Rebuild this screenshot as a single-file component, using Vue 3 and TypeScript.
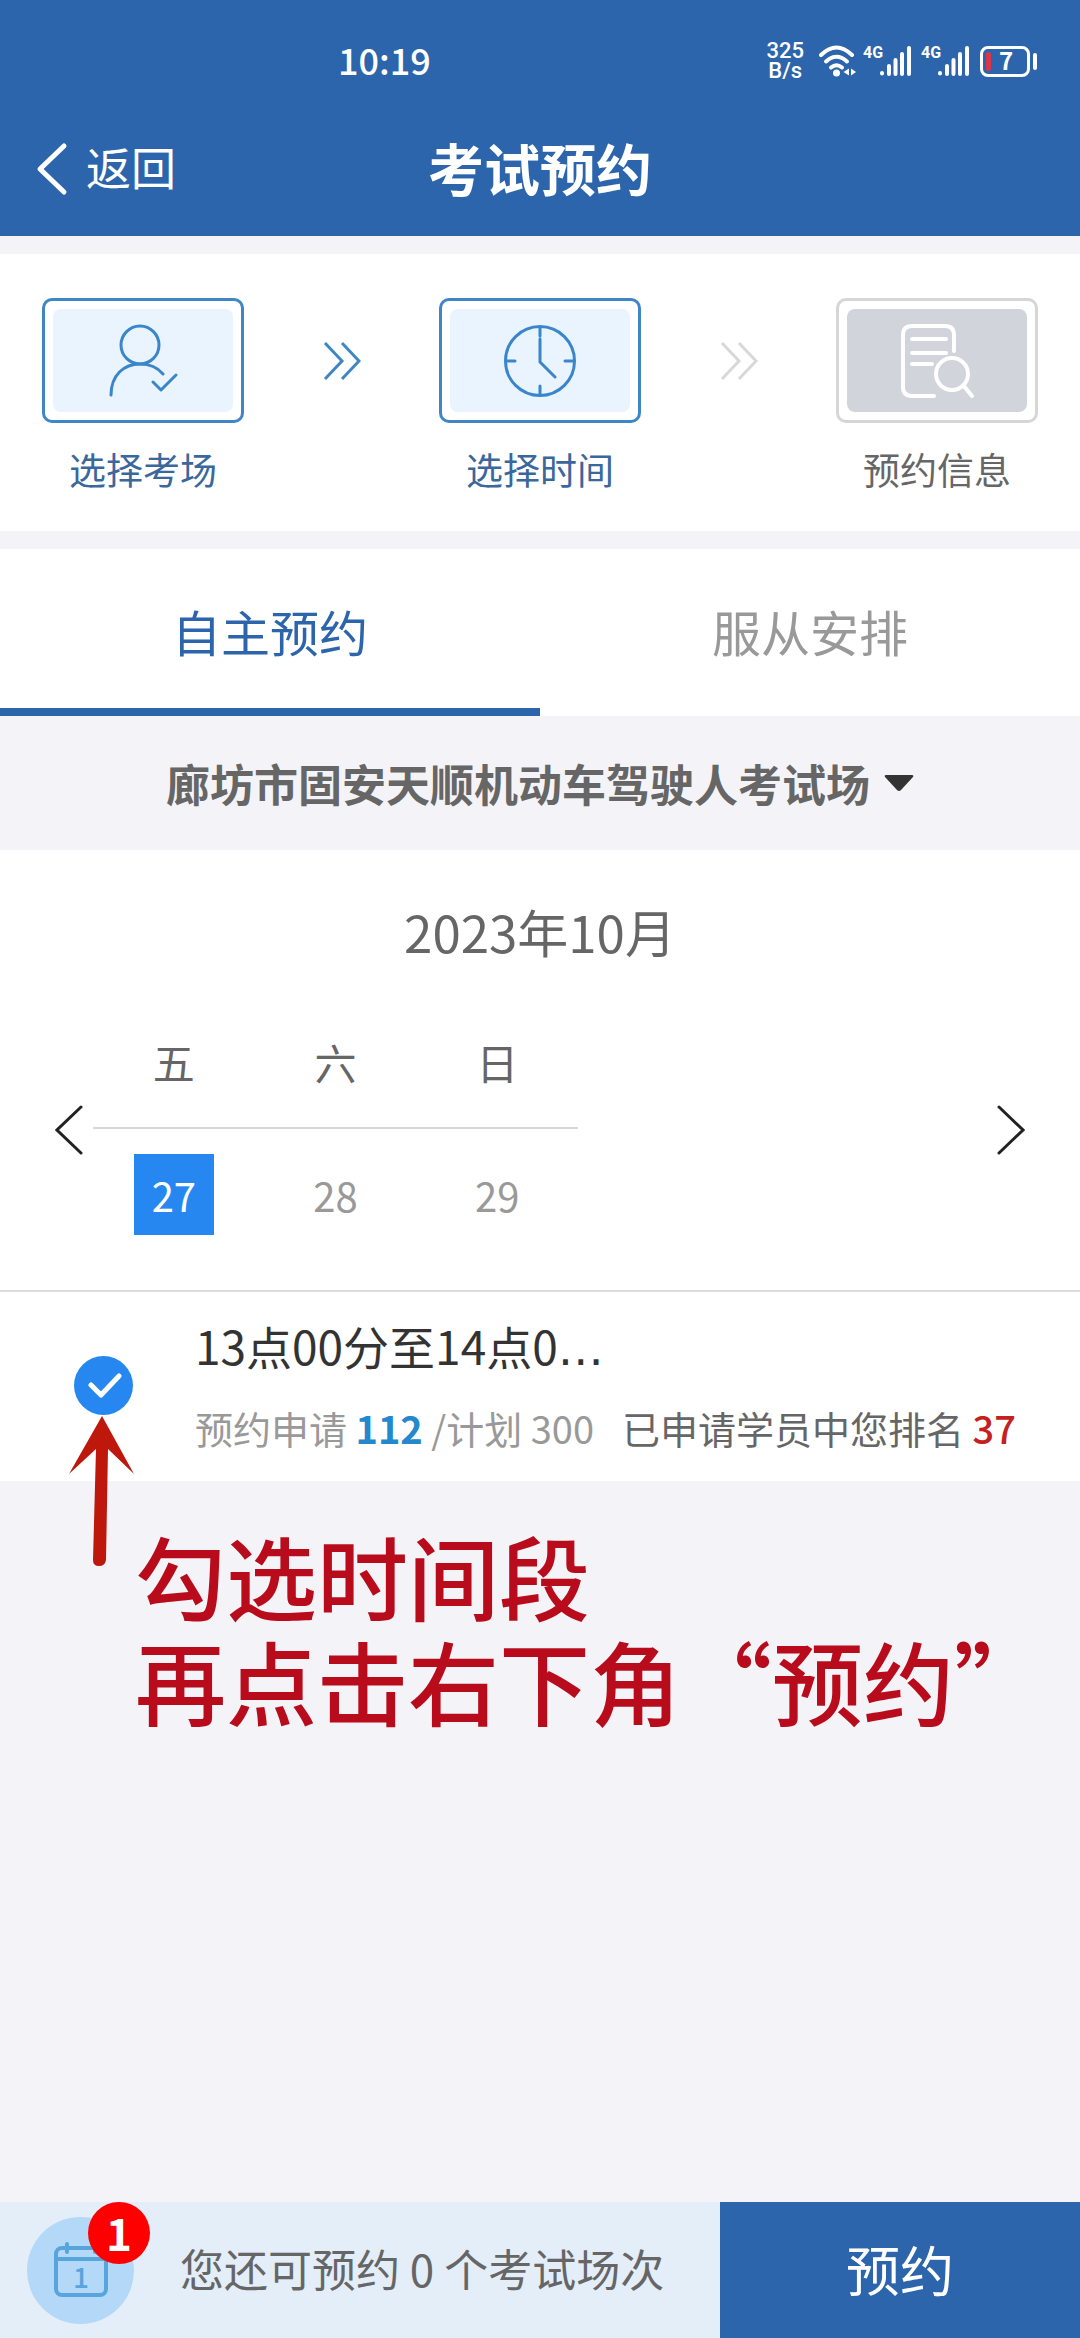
<script setup lang="ts">
import { ref } from 'vue'

interface Step {
  key: 'place' | 'time' | 'info'
  label: string
  active: boolean
}

const steps: Step[] = [
  { key: 'place', label: '选择考场', active: true },
  { key: 'time', label: '选择时间', active: true },
  { key: 'info', label: '预约信息', active: false },
]

const tabs = ['自主预约', '服从安排']
const activeTab = ref(0)

const venues = ['廊坊市固安天顺机动车驾驶人考试场']
const venue = ref(venues[0])

const weekdays = ['五', '六', '日']
const days = [27, 28, 29]
const selectedDay = ref(27)

const slotChecked = ref(true)
const signals = [0, 1]
</script>

<template>
  <div class="page">
    <header class="top">
      <div class="status">
        <span class="clock">10:19</span>
        <div class="indicators">
          <span class="speed"><span>325</span><span>B/s</span></span>
          <svg class="wifi" viewBox="0 0 37 32" width="37" height="32" aria-hidden="true">
            <g fill="none" stroke="#fff" stroke-width="4" stroke-linecap="round">
              <path d="M2 10Q17.500 -5 33 10" />
              <path d="M7 16.500Q17.500 7 28 16.500" />
              <path d="M12 22.500Q17.500 18 23 22.500" />
            </g>
            <circle cx="17.500" cy="28" r="3.500" fill="#fff" />
            <path d="M30 23.500V30.500L24.500 27zM32 23.500V30.500L37 27z" fill="#fff" />
          </svg>
          <span v-for="s in signals" :key="s" class="signal">
            <span class="net">4G</span>
            <svg viewBox="0 0 31 32" width="31" height="32" aria-hidden="true">
              <g stroke="#fff" stroke-width="4" stroke-linecap="round">
                <path d="M2 28V28.500M9 21V29M15.500 15V29M22 9V29M29 3V29" />
              </g>
            </svg>
          </span>
          <span class="battery">
            <span class="cell"><span class="charge"></span><span class="level">7</span></span>
            <span class="nub"></span>
          </span>
        </div>
      </div>
      <div class="bar">
        <button class="back" type="button">
          <svg viewBox="0 0 32 54" width="32" height="54" aria-hidden="true">
            <path d="M28 4L4 27L28 50" fill="none" stroke="#fff" stroke-width="5" stroke-linecap="round" stroke-linejoin="round" />
          </svg>
          <span>返回</span>
        </button>
        <h1>考试预约</h1>
      </div>
    </header>

    <main>
      <section class="steps">
        <template v-for="(step, i) in steps" :key="step.key">
          <svg v-if="i > 0" class="next" :class="{ on: step.active }" viewBox="0 0 38 40" width="38" height="40" aria-hidden="true">
            <path d="M2 2L19 20L2 38M19 2L36 20L19 38" />
          </svg>
          <div class="step" :class="{ on: step.active }">
            <div class="frame">
              <div class="tile">
                <svg v-if="step.key === 'place'" viewBox="0 0 70 76" width="70" height="76" aria-hidden="true">
                  <circle cx="32" cy="22" r="19" />
                  <path d="M3 72C3 52 16 41 32 41C42 41 50 45 55 51M45 59L53 67L68 52" />
                </svg>
                <svg v-else-if="step.key === 'time'" viewBox="0 0 74 76" width="74" height="76" aria-hidden="true">
                  <circle cx="37" cy="38" r="34.500" />
                  <path d="M37 4V13M37 63V72M3 38H12M62 38H71M37 16V39L52 54" />
                </svg>
                <svg v-else viewBox="0 0 74 76" width="74" height="76" aria-hidden="true">
                  <path d="M34 73H12Q3 73 3 64V12Q3 3 12 3H45Q54 3 54 12V28M12 16H46M12 30H46M12 41H32M63 62L72 73" />
                  <circle cx="52" cy="51" r="16" />
                </svg>
              </div>
            </div>
            <span class="caption">{{ step.label }}</span>
          </div>
        </template>
      </section>

      <nav class="tabs">
        <button
          v-for="(tab, i) in tabs"
          :key="tab"
          type="button"
          :class="{ current: i === activeTab }"
          @click="activeTab = i"
        >
          {{ tab }}
        </button>
      </nav>

      <label class="venue">
        <select v-model="venue" aria-label="考试场">
          <option v-for="v in venues" :key="v" :value="v">{{ v }}</option>
        </select>
        <svg viewBox="0 0 30 18" width="30" height="18" aria-hidden="true">
          <path d="M2 1H28Q30 1 29 3L17 16Q15 18 13 16L1 3Q0 1 2 1Z" fill="#333" />
        </svg>
      </label>

      <section class="calendar">
        <h2>2023年10月</h2>
        <div class="week">
          <button class="turn" type="button" aria-label="上一周">
            <svg viewBox="0 0 28 50" width="28" height="50" aria-hidden="true">
              <path d="M26 2L2 25L26 48" />
            </svg>
          </button>
          <table>
            <thead>
              <tr>
                <th v-for="w in weekdays" :key="w" scope="col">{{ w }}</th>
              </tr>
            </thead>
            <tbody>
              <tr>
                <td v-for="d in days" :key="d">
                  <button type="button" class="day" :class="{ picked: d === selectedDay }" @click="selectedDay = d">{{ d }}</button>
                </td>
              </tr>
            </tbody>
          </table>
          <button class="turn" type="button" aria-label="下一周">
            <svg viewBox="0 0 28 50" width="28" height="50" aria-hidden="true">
              <path d="M2 2L26 25L2 48" />
            </svg>
          </button>
        </div>
      </section>

      <section class="slot">
        <input id="slot" v-model="slotChecked" type="checkbox" />
        <svg class="tick" viewBox="0 0 34 28" width="34" height="28" aria-hidden="true">
          <path d="M3 13L13 23L31 4" />
        </svg>
        <label for="slot">
          <span class="time">13点00分至14点0<span class="dots">…</span></span>
          <span class="counts">
            <span class="applied">预约申请 <b>112</b> /计划 300</span>
            <span class="rank">已申请学员中您排名 <em>37</em></span>
          </span>
        </label>
        <svg class="arrow" viewBox="0 0 66 152" width="66" height="152" aria-hidden="true">
          <path d="M34 0L66 58L40 33L38 144Q37 150 31 150Q25 150 25 144L28 33L1 58Z" fill="#bd180b" />
        </svg>
      </section>

      <p class="hint">勾选时间段<br />再点击右下角<span class="quote">“</span>预约<span class="quote">”</span></p>
    </main>

    <footer class="foot">
      <div class="remain">
        <span class="date-icon">
          <svg viewBox="0 0 56 56" width="56" height="56" aria-hidden="true">
            <g fill="none" stroke="#58a4dc" stroke-width="4" stroke-linecap="round">
              <rect x="3" y="6" width="50" height="47" rx="6" />
              <path d="M3 17H53M14 2V10M42 2V10" />
            </g>
            <text x="28" y="46" text-anchor="middle" font-size="28" font-weight="500" fill="#58a4dc">1</text>
          </svg>
          <span class="badge">1</span>
        </span>
        <span class="remain-text">您还可预约 0 个考试场次</span>
      </div>
      <button class="book" type="button">预约</button>
    </footer>
  </div>
</template>

<style>
body {
  margin: 0;
  background: #f4f4f8;
}
</style>

<style scoped>
.page {
  display: flex;
  flex-direction: column;
  min-height: 100vh;
  background: #f4f4f8;
  color: #666;
  font-family: "Noto Sans CJK SC", "Noto Sans", sans-serif;
}

button,
select {
  border: 0;
  padding: 0;
  background: none;
  color: inherit;
  font: inherit;
}

h1,
h2,
p {
  margin: 0;
}

main {
  flex: 1;
}

.top {
  background: #2c65ab;
  color: #fff;
}

.status {
  display: flex;
  align-items: center;
  justify-content: space-between;
  height: 82px;
  padding: 20px 43px 0 338px;
}

.clock {
  padding-bottom: 4px;
  font-size: 36px;
  font-weight: 500;
}

.indicators {
  display: flex;
  align-items: center;
}

.speed {
  display: flex;
  flex-direction: column;
  align-items: center;
  margin-right: 15px;
  font-family: "Roboto", sans-serif;
  font-size: 22px;
  font-weight: 500;
  line-height: 20px;
}

.signal {
  display: flex;
  align-items: flex-start;
  margin-left: 7px;
}

.net {
  width: 17px;
  font-family: "Liberation Sans Narrow", "Roboto", sans-serif;
  font-size: 16px;
  font-weight: 700;
  line-height: 16px;
}

.signal + .signal {
  margin-left: 10px;
}

.battery {
  display: flex;
  align-items: center;
  gap: 3px;
  margin-left: 11px;
}

.cell {
  display: flex;
  align-items: center;
  box-sizing: border-box;
  width: 50px;
  height: 31px;
  padding-left: 3px;
  border: 3px solid #fff;
  border-radius: 8px;
}

.charge {
  width: 5px;
  height: 19px;
  background: #d9364c;
  border-radius: 2px;
}

.level {
  flex: 1;
  padding: 0 6px 2px 0;
  font-size: 24px;
  font-weight: 700;
  line-height: 24px;
  text-align: center;
}

.nub {
  width: 4px;
  height: 17px;
  background: #fff;
  border-radius: 2px;
}

.bar {
  display: grid;
  grid-template-columns: 1fr auto 1fr;
  align-items: center;
  height: 134px;
  padding: 0 36px;
}

.back {
  display: flex;
  align-items: center;
  gap: 18px;
  font-size: 45px;
  line-height: 60px;
}

.back span,
.bar h1 {
  padding-bottom: 4px;
}

.bar h1 {
  font-size: 56px;
  font-weight: 700;
  line-height: 72px;
}

.steps {
  display: flex;
  justify-content: space-between;
  margin: 18px 0;
  padding: 44px 42px 34px;
  background: #fff;
}

.step {
  display: flex;
  flex-direction: column;
  align-items: center;
  gap: 18px;
  color: #666;
}

.step.on {
  color: #3a679c;
}

.frame {
  box-sizing: border-box;
  width: 202px;
  height: 125px;
  padding: 8px;
  border: 3px solid #d6d6d6;
  border-radius: 10px;
}

.on .frame {
  border-color: #3f86c4;
}

.tile {
  display: flex;
  align-items: center;
  justify-content: center;
  height: 100%;
  border-radius: 8px;
  background: #d2d4dc;
}

.on .tile {
  background: #e9f4fe;
}

.tile svg {
  fill: none;
  stroke: #fff;
  stroke-width: 4;
  stroke-linecap: round;
  stroke-linejoin: round;
}

.on .tile svg {
  stroke: #3b86cb;
  stroke-width: 3;
}

.caption {
  font-size: 37px;
  line-height: 56px;
}

.next {
  margin-top: 43px;
  fill: none;
  stroke: #d8d8d8;
  stroke-width: 3;
}

.next.on {
  stroke: #3f86c4;
}

.tabs {
  display: flex;
  background: #fff;
}

.tabs button {
  flex: 1;
  height: 167px;
  border-top: 4px solid transparent;
  border-bottom: 8px solid transparent;
  color: #999;
  font-size: 49px;
}

.tabs .current {
  border-bottom-color: #2c65ab;
  color: #2c65ab;
}

.venue {
  display: flex;
  align-items: center;
  justify-content: center;
  gap: 14px;
  height: 134px;
}

.venue select {
  appearance: none;
  color: #666;
  font-size: 44px;
  font-weight: 700;
  line-height: 64px;
}

.calendar {
  padding: 44px 55px 48px;
  background: #fff;
  border-bottom: 2px solid #ddd;
}

.calendar h2 {
  font-size: 51px;
  font-weight: 400;
  line-height: 74px;
  text-align: center;
}

.week {
  display: flex;
  align-items: center;
  padding-top: 50px;
}

.turn {
  display: flex;
}

.turn svg {
  fill: none;
  stroke: #222;
  stroke-width: 3;
  stroke-linecap: round;
}

.week table {
  width: 50%;
  margin: 0 auto 0 10px;
  border-collapse: collapse;
  table-layout: fixed;
}

.week th {
  height: 110px;
  padding: 0 0 22px;
  box-sizing: border-box;
  border-bottom: 2px solid #d8d8d8;
  font-size: 42px;
  font-weight: 400;
}

.week td {
  padding: 25px 0 7px;
  text-align: center;
}

.day {
  width: 80px;
  height: 81px;
  color: #999;
  font-size: 40px;
}

.day.picked {
  background: #2787f0;
  color: #fff;
}

.slot {
  position: relative;
  display: flex;
  align-items: center;
  gap: 62px;
  padding: 18px 48px 21px 74px;
  background: #fff;
}

.slot input {
  flex: none;
  width: 59px;
  height: 59px;
  margin: 0;
  appearance: none;
  border: 3px solid #ccc;
  border-radius: 50%;
}

.slot input:checked {
  border: 0;
  background: #2787f0;
}

.tick {
  position: absolute;
  left: 88px;
  top: 80px;
  fill: none;
  stroke: #fff;
  stroke-width: 5;
  stroke-linecap: round;
  stroke-linejoin: round;
  pointer-events: none;
}

.slot label {
  display: flex;
  flex-direction: column;
  gap: 12px;
  white-space: nowrap;
}

.time {
  color: #333;
  font-size: 46px;
  line-height: 70px;
}

.dots {
  font-family: "DejaVu Sans", sans-serif;
}

.counts {
  display: flex;
  gap: 28px;
  color: #666;
  font-size: 38px;
  line-height: 64px;
}

.applied {
  color: #999;
}

.applied b {
  color: #2488cc;
}

.rank em {
  color: #c4201e;
  font-style: normal;
  font-weight: 500;
}

.arrow {
  position: absolute;
  left: 68px;
  top: 124px;
}

.hint {
  padding: 52px 0 0 135px;
  color: #b80c1c;
  font-family: "Liberation Serif", "Noto Sans CJK SC", serif;
  font-size: 91px;
  font-weight: 500;
  line-height: 101px;
}

.quote {
  font-family: "Noto Sans CJK SC", sans-serif;
  line-height: 1;
}

.foot {
  display: flex;
  height: 136px;
}

.remain {
  flex: 2 1 0;
  box-sizing: border-box;
  display: flex;
  align-items: center;
  gap: 46px;
  padding-left: 27px;
  background: #e4eef9;
  font-size: 44px;
}

.remain-text {
  padding-bottom: 4px;
}

.date-icon {
  position: relative;
  display: flex;
  align-items: center;
  justify-content: center;
  width: 107px;
  height: 107px;
  border-radius: 50%;
  background: #b4d8f8;
}

.badge {
  position: absolute;
  top: -15px;
  right: -16px;
  width: 62px;
  height: 62px;
  border-radius: 50%;
  background: #fe0000;
  color: #fff;
  font-size: 44px;
  font-weight: 700;
  line-height: 60px;
  text-align: center;
}

.book {
  width: calc(100% / 3);
  padding-bottom: 4px;
  background: #2c65ab;
  color: #fff;
  font-size: 54px;
}
</style>
